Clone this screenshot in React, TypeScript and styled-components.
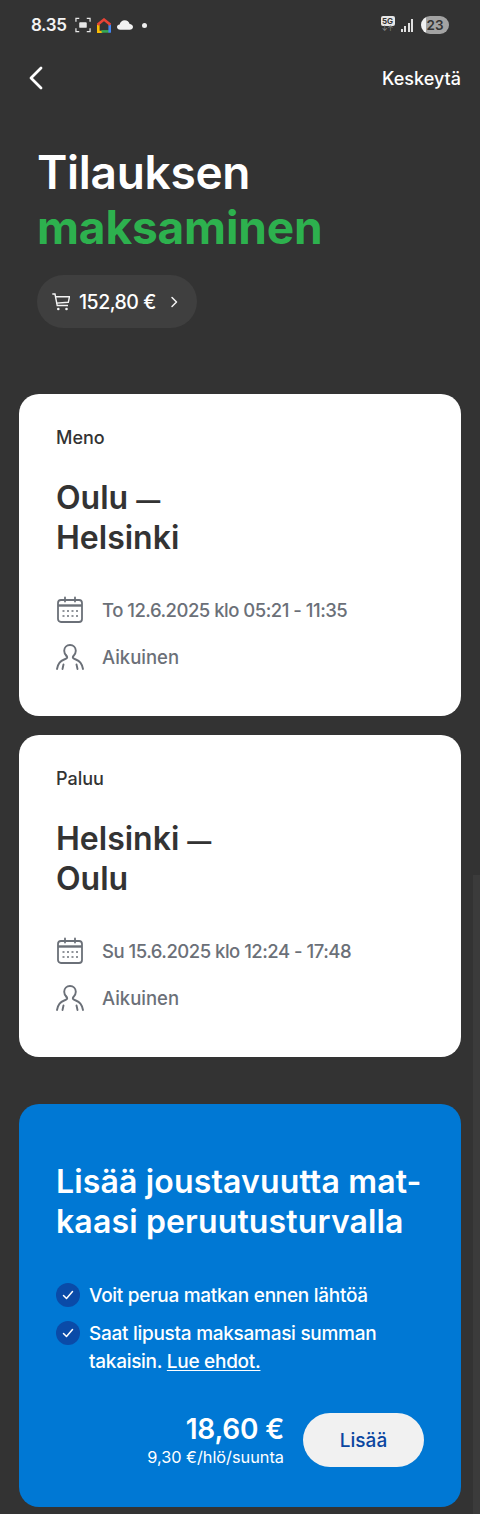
import styled, { createGlobalStyle } from "styled-components";

const GlobalStyle = createGlobalStyle`
  html, body {
    margin: 0;
    padding: 0;
    background: #333333;
  }
  * {
    box-sizing: border-box;
  }
`;

const trips = [
  { label: "Meno", from: "Oulu", to: "Helsinki", when: "To 12.6.2025 klo 05:21 - 11:35" },
  { label: "Paluu", from: "Helsinki", to: "Oulu", when: "Su 15.6.2025 klo 12:24 - 17:48" },
];

const CalendarIcon = () => (
  <svg width="28" height="28" viewBox="0 0 28 28" fill="none" stroke="#6b7078" strokeWidth="1.8">
    <rect x="2" y="4" width="24" height="22" rx="3" />
    <path d="M2 9.500h24" strokeWidth="2.400" />
    <path d="M9 1.500v4M19 1.500v4" strokeLinecap="round" />
    <path d="M6.500 15h2M11 15h2M15.500 15h2M20 15h2M6.500 20h2M11 20h2M15.500 20h2M20 20h2" strokeWidth="1.500" />
  </svg>
);

const PersonIcon = () => (
  <svg width="28" height="28" viewBox="0 0 28 28" fill="none" stroke="#6b7078" strokeWidth="1.900" strokeLinecap="round">
    <path d="M10.200 12.500C9 11.200 8.200 9.500 8.200 7.800 8.200 4.300 10.700 2 14 2s5.800 2.300 5.800 5.800c0 1.700-.8 3.400-2 4.700-.7.700-1 1.200-1 1.800 0 1 1 1.500 3 2.200 3.800 1.300 6.300 4 7.200 9.500" />
    <path d="M10.200 12.500c.7.700 1 1.200 1 1.800 0 1-1 1.500-3 2.200C4.400 17.800 1.900 20.500 1 26" />
    <path d="M6.500 26l1-4.500M21.500 26l-1-4.500" />
  </svg>
);

const CartIcon = () => (
  <svg width="18" height="18" viewBox="0 0 18 18" fill="none" stroke="#f4f4f4" strokeWidth="1.400" style={{ flex: "none" }}>
    <path d="M0.300 1h2.700l2.200 11.500h10.800" />
    <path d="M3.500 3.700h14l-1.200 5.600-11.800 .8" />
    <circle cx="6.300" cy="16" r="1.300" fill="#f4f4f4" stroke="none" />
    <circle cx="14.500" cy="16" r="1.300" fill="#f4f4f4" stroke="none" />
  </svg>
);

const CheckIcon = () => (
  <svg width="12" height="10" viewBox="0 0 12 10" fill="none" stroke="#ffffff" strokeWidth="1.500" strokeLinecap="round" strokeLinejoin="round">
    <path d="M1.500 5.500L4.500 8.500 10.500 1.500" />
  </svg>
);

const HomeLogo = () => (
  <svg width="14" height="15" viewBox="0 0 14 15" fill="none" strokeWidth="2.600">
    <path d="M1.300 6.500V14h4" stroke="#fbbc04" />
    <path d="M4.500 13.400h8" stroke="#34a853" />
    <path d="M12.700 6.500V14.700" stroke="#4285f4" />
    <path d="M.6 6.800L7 1.600l6.400 5.200" stroke="#ea4335" />
  </svg>
);

const App = () => {
  return (
    <Page>
      <GlobalStyle />
      <StatusBar>
        <StatusLeft>
          <Clock>8.35</Clock>
          <svg width="16" height="16" viewBox="0 0 17 17" fill="none" stroke="#e8e8e8" strokeWidth="1.300">
            <path d="M1 5V1.500h3.500M12.500 1.500H16V5M16 12v3.500h-3.500M4.500 15.500H1V12" />
            <rect x="4.500" y="5.500" width="8" height="6" rx="1" fill="#e8e8e8" stroke="none" />
          </svg>
          <HomeLogo />
          <svg width="16" height="10" viewBox="0 0 17 10" fill="#f2f2f2">
            <path d="M3.500 10C1.500 10 0 8.800 0 7.200c0-1.500 1.200-2.600 2.800-2.700C3.400 2 5.500 0 8.200 0c2.600 0 4.700 1.700 5.200 4 2 .1 3.600 1.500 3.600 3.100S15.500 10 13.500 10z" />
          </svg>
          <Dot />
        </StatusLeft>
        <StatusRight>
          <NetworkBadge>
            <b>5G</b>
            <i>↓↑</i>
          </NetworkBadge>
          <SignalBars>
            <SignalBar $h={3} />
            <SignalBar $h={6} />
            <SignalBar $h={9} />
            <SignalBar $h={13} />
          </SignalBars>
          <Battery>23</Battery>
        </StatusRight>
      </StatusBar>

      <NavBar>
        <svg width="16" height="24" viewBox="0 0 16 24" fill="none" stroke="#ffffff" strokeWidth="2.800" strokeLinecap="round" strokeLinejoin="round">
          <path d="M13 2L3 12l10 10" />
        </svg>
        <NavAction>Keskeytä</NavAction>
      </NavBar>

      <Heading>
        Tilauksen
        <Accent>maksaminen</Accent>
      </Heading>

      <CartPill>
        <CartIcon />
        <CartSum>152,80 €</CartSum>
        <svg width="8" height="12" viewBox="0 0 8 12" fill="none" stroke="#f4f4f4" strokeWidth="1.500" strokeLinecap="round" strokeLinejoin="round">
          <path d="M2 1.500L6.500 6 2 10.500" />
        </svg>
      </CartPill>

      <Cards>
        {trips.map((trip) => (
          <TripCard key={trip.label}>
            <TripLabel>{trip.label}</TripLabel>
            <TripRoute>
              {trip.from} <RouteDash>—</RouteDash>
              <br />
              {trip.to}
            </TripRoute>
            <InfoRow $track={-0.5}>
              <CalendarIcon />
              {trip.when}
            </InfoRow>
            <InfoRow $track={0}>
              <PersonIcon />
              Aikuinen
            </InfoRow>
          </TripCard>
        ))}
      </Cards>

      <OfferCard>
        <OfferTitle>
          Lisää joustavuutta mat-
          <br />
          kaasi peruutusturvalla
        </OfferTitle>
        <CheckList>
          <CheckItem>
            <CheckMark>
              <CheckIcon />
            </CheckMark>
            Voit perua matkan ennen lähtöä
          </CheckItem>
          <CheckItem>
            <CheckMark>
              <CheckIcon />
            </CheckMark>
            <span>
              Saat lipusta maksamasi summan
              <br />
              takaisin. <TermsLink>Lue ehdot.</TermsLink>
            </span>
          </CheckItem>
        </CheckList>
        <OfferFooter>
          <PriceBlock>
            <Price>18,60 €</Price>
            <PriceNote>9,30 €/hlö/suunta</PriceNote>
          </PriceBlock>
          <AddButton>Lisää</AddButton>
        </OfferFooter>
      </OfferCard>
      <ScrollThumb />
    </Page>
  );
};

export default App;

const Page = styled.div`
  position: relative;
  width: 480px;
  height: 1514px;
  overflow: hidden;
  background: #333333;
  font-family: Inter, "Liberation Sans", sans-serif;
  color: #ffffff;
`;

const StatusBar = styled.div`
  display: flex;
  align-items: center;
  justify-content: space-between;
  height: 50px;
  padding: 0 31px;
`;

const StatusLeft = styled.div`
  display: flex;
  align-items: center;
  gap: 6px;
`;

const Clock = styled.span`
  font-size: 17px;
  font-weight: 600;
  letter-spacing: -0.4px;
  margin-right: 3px;
  color: #f4f4f4;
`;

const Dot = styled.span`
  width: 5px;
  height: 5px;
  margin-left: 3px;
  border-radius: 50%;
  background: #eeeeee;
`;

const StatusRight = styled.div`
  display: flex;
  align-items: center;
  gap: 6px;
`;

const NetworkBadge = styled.div`
  display: flex;
  flex-direction: column;
  align-items: center;
  width: 14px;
  margin-top: -2px;
  b {
    width: 14px;
    height: 10px;
    border-radius: 2px;
    background: #e6e6e6;
    color: #333333;
    font-size: 8px;
    line-height: 10px;
    font-weight: 700;
    text-align: center;
  }
  i {
    height: 6px;
    font-size: 7px;
    line-height: 6px;
    font-style: normal;
    color: #8a8a8a;
  }
`;

const SignalBars = styled.div`
  display: flex;
  align-items: flex-end;
  gap: 1.5px;
  height: 13px;
`;

const SignalBar = styled.span<{ $h: number }>`
  width: 2px;
  height: ${(p) => p.$h}px;
  background: #e0e0e0;
`;

const Battery = styled.div`
  width: 28px;
  height: 18px;
  margin-left: 2px;
  border-radius: 9px;
  background: linear-gradient(90deg, #f0f0f0 0 5px, #a3a3a3 5px);
  color: #333333;
  font-size: 13.500px;
  line-height: 18px;
  font-weight: 600;
  text-align: center;
`;

const NavBar = styled.div`
  display: flex;
  align-items: center;
  justify-content: space-between;
  height: 28px;
  margin-top: 14px;
  padding: 0 19px 0 28px;
`;

const NavAction = styled.span`
  font-size: 18px;
  font-weight: 500;
`;

const Heading = styled.h1`
  margin: 53px 0 0 37px;
  font-size: 46px;
  line-height: 55px;
  font-weight: 600;
  letter-spacing: -0.3px;
`;

const Accent = styled.span`
  display: block;
  font-weight: 700;
  letter-spacing: -0.15px;
  color: #2db14e;
`;

const CartPill = styled.div`
  display: flex;
  align-items: center;
  width: 160px;
  height: 53px;
  margin: 20px 0 0 37px;
  padding: 0 0 0 15px;
  border-radius: 27px;
  background: #3f3f3f;
`;

const CartSum = styled.span`
  margin: 0 14px 0 9px;
  font-size: 19.500px;
  font-weight: 500;
  letter-spacing: -0.5px;
  white-space: nowrap;
`;

const Cards = styled.div`
  display: flex;
  flex-direction: column;
  gap: 19px;
  margin: 66px 19px 0;
`;

const TripCard = styled.section`
  height: 322px;
  padding: 33px 37px 0;
  border-radius: 20px;
  background: #ffffff;
  color: #333333;
`;

const TripLabel = styled.div`
  font-size: 18px;
  line-height: 22px;
  font-weight: 500;
`;

const TripRoute = styled.h2`
  margin: 29px 0 38px;
  font-size: 32px;
  line-height: 40px;
  font-weight: 600;
`;

const RouteDash = styled.span`
  font-size: 24px;
  font-weight: 700;
  line-height: 1;
`;

const InfoRow = styled.div<{ $track: number }>`
  display: flex;
  align-items: center;
  gap: 18px;
  height: 28px;
  margin-bottom: 19px;
  font-size: 18.500px;
  font-weight: 500;
  letter-spacing: ${(p) => p.$track}px;
  color: #6b7078;
  white-space: nowrap;
`;

const OfferCard = styled.section`
  height: 403px;
  margin: 47px 19px 0;
  padding: 58px 37px 0;
  border-radius: 20px;
  background: #0078d4;
`;

const OfferTitle = styled.h2`
  margin: 0;
  font-size: 32px;
  line-height: 40px;
  font-weight: 600;
  letter-spacing: 0.15px;
`;

const CheckList = styled.ul`
  display: flex;
  flex-direction: column;
  gap: 10px;
  margin: 40px 0 0;
  padding: 0;
  list-style: none;
`;

const CheckItem = styled.li`
  display: flex;
  gap: 9px;
  font-size: 19px;
  line-height: 28px;
  font-weight: 500;
  letter-spacing: -0.28px;
`;

const CheckMark = styled.span`
  display: flex;
  align-items: center;
  justify-content: center;
  flex: none;
  width: 24px;
  height: 24px;
  margin-top: 1px;
  border-radius: 50%;
  background: #0a4ba8;
`;

const TermsLink = styled.span`
  text-decoration: underline;
  text-underline-offset: 2px;
`;

const OfferFooter = styled.div`
  display: flex;
  align-items: center;
  justify-content: flex-end;
  gap: 19px;
  margin-top: 36px;
`;

const PriceBlock = styled.div`
  text-align: right;
`;

const Price = styled.div`
  font-size: 28px;
  line-height: 34px;
  font-weight: 600;
  letter-spacing: -0.2px;
`;

const PriceNote = styled.div`
  font-size: 16.300px;
  line-height: 22px;
  font-weight: 400;
`;

const AddButton = styled.button`
  width: 121px;
  height: 54px;
  border: 0;
  border-radius: 27px;
  background: #f1f1f1;
  color: #0a46a0;
  font-family: inherit;
  font-size: 19px;
  font-weight: 500;
`;

const ScrollThumb = styled.div`
  position: absolute;
  top: 875px;
  right: 0;
  width: 7px;
  height: 639px;
  background: #3b3b3b;
`;
